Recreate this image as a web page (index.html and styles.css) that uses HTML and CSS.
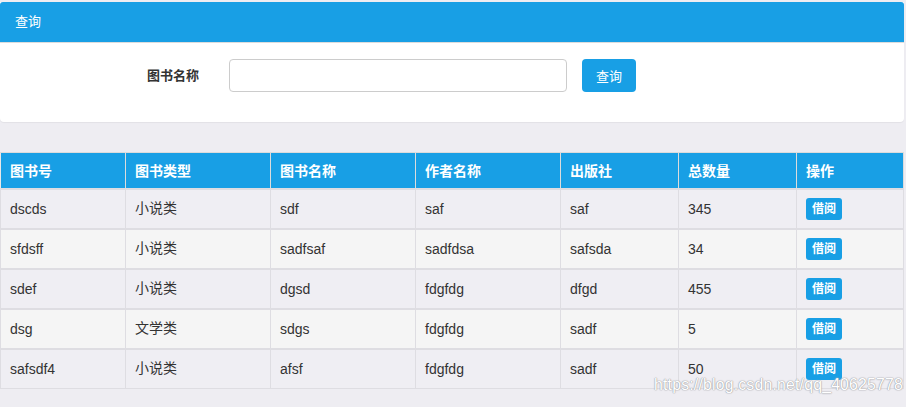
FILE: index.html
```html
<!DOCTYPE html>
<html lang="zh">
<head>
<meta charset="utf-8">
<title>图书查询</title>
<link rel="stylesheet" href="styles.css">
</head>
<body>
<div class="page">
  <div class="card">
    <div class="card-head">查询</div>
    <div class="card-body">
      <label class="field-label">图书名称</label>
      <input class="field-input" type="text">
      <button class="btn-query">查询</button>
    </div>
  </div>

  <table class="books">
    <colgroup>
      <col class="c1"><col class="c2"><col class="c3"><col class="c4"><col class="c5"><col class="c6"><col class="c7">
    </colgroup>
    <thead>
      <tr><th>图书号</th><th>图书类型</th><th>图书名称</th><th>作者名称</th><th>出版社</th><th>总数量</th><th>操作</th></tr>
    </thead>
    <tbody>
      <tr><td>dscds</td><td><span class="zh">小说类</span></td><td>sdf</td><td>saf</td><td>saf</td><td>345</td><td><span class="btn-borrow">借阅</span></td></tr>
      <tr><td>sfdsff</td><td><span class="zh">小说类</span></td><td>sadfsaf</td><td>sadfdsa</td><td>safsda</td><td>34</td><td><span class="btn-borrow">借阅</span></td></tr>
      <tr><td>sdef</td><td><span class="zh">小说类</span></td><td>dgsd</td><td>fdgfdg</td><td>dfgd</td><td>455</td><td><span class="btn-borrow">借阅</span></td></tr>
      <tr><td>dsg</td><td><span class="zh">文学类</span></td><td>sdgs</td><td>fdgfdg</td><td>sadf</td><td>5</td><td><span class="btn-borrow">借阅</span></td></tr>
      <tr><td>safsdf4</td><td><span class="zh">小说类</span></td><td>afsf</td><td>fdgfdg</td><td>sadf</td><td>50</td><td><span class="btn-borrow">借阅</span></td></tr>
    </tbody>
  </table>
  <div class="watermark">https://blog.csdn.net/qq_40625778</div>
</div>
</body>
</html>
```

FILE: styles.css
```css
html, body {
  margin: 0;
  padding: 0;
  background: #eeedf2;
  font-family: "Liberation Sans", "Noto Sans CJK SC", sans-serif;
  font-size: 14px;
  color: #333;
}

.page {
  position: relative;
  width: 906px;
  height: 407px;
  padding-top: 2px;
  box-sizing: border-box;
}

.card {
  width: 904px;
  background: #fff;
  border-radius: 0 0 4px 4px;
  box-shadow: 0 1px 1px rgba(0,0,0,0.05);
}

.card-head {
  height: 40px;
  line-height: 40px;
  background: #189fe5;
  color: #fff;
  padding-left: 15px;
  font-size: 13px;
  border-bottom: 1px solid #dcdcdc;
  border-radius: 3px 3px 0 0;
}

.card-body {
  height: 79px;
  display: flex;
  align-items: flex-start;
  padding-top: 16px;
  box-sizing: border-box;
}

.field-label {
  width: 229px;
  padding-right: 30px;
  box-sizing: border-box;
  text-align: right;
  font-weight: bold;
  font-size: 13px;
  line-height: 33px;
  color: #333;
}

.field-input {
  width: 338px;
  height: 33px;
  box-sizing: border-box;
  border: 1px solid #ccc;
  border-radius: 4px;
  margin: 0;
  padding: 0 10px;
  background: #fff;
}

.btn-query {
  margin-left: 15px;
  width: 54px;
  height: 33px;
  border: none;
  border-radius: 4px;
  background: #189fe5;
  color: #fff;
  font-family: "Liberation Sans", "Noto Sans CJK SC", sans-serif;
  font-size: 13px;
  padding: 0;
}

.books {
  margin-top: 30px;
  width: 903px;
  border-collapse: collapse;
  table-layout: fixed;
}

col.c1 { width: 125px; }
col.c2 { width: 145px; }
col.c3 { width: 145px; }
col.c4 { width: 145px; }
col.c5 { width: 118px; }
col.c6 { width: 118px; }
col.c7 { width: 107px; }

.books th {
  background: #189fe5;
  color: #fff;
  font-weight: bold;
  text-align: left;
  height: 35px;
  line-height: 20px;
  padding: 0 0 0 9px;
  border: 1px solid #dcdcdc;
  border-left-color: #e8e8e8;
  font-size: 14px;
}

.books td {
  height: 38px;
  line-height: 20px;
  padding: 0 0 0 9px;
  border-left: 1px solid #dedde2;
  border-right: 1px solid #dedde2;
  border-top: 2px solid #dedde2;
  color: #333;
  font-size: 14px;
}

.books td .zh {
  vertical-align: 2px;
}

.books tbody tr:nth-child(odd) td { background: #efeef3; }
.books tbody tr:nth-child(even) td { background: #f5f5f5; }
.books tbody tr:last-child td { border-bottom: 1px solid #dedde2; }

.btn-borrow {
  display: inline-block;
  vertical-align: middle;
  width: 36px;
  height: 22px;
  line-height: 22px;
  text-align: center;
  background: #189fe5;
  color: #fff;
  border-radius: 3px;
  font-size: 12px;
  font-weight: bold;
}

.watermark {
  position: absolute;
  left: 654px;
  top: 376px;
  font-size: 15.8px;
  color: #ffffff;
  text-shadow: 0 0 1px #9a9aa0, 0 0 1px #9a9aa0, 0 0 2px #c8c8cc;
  letter-spacing: 0.2px;
}
```
